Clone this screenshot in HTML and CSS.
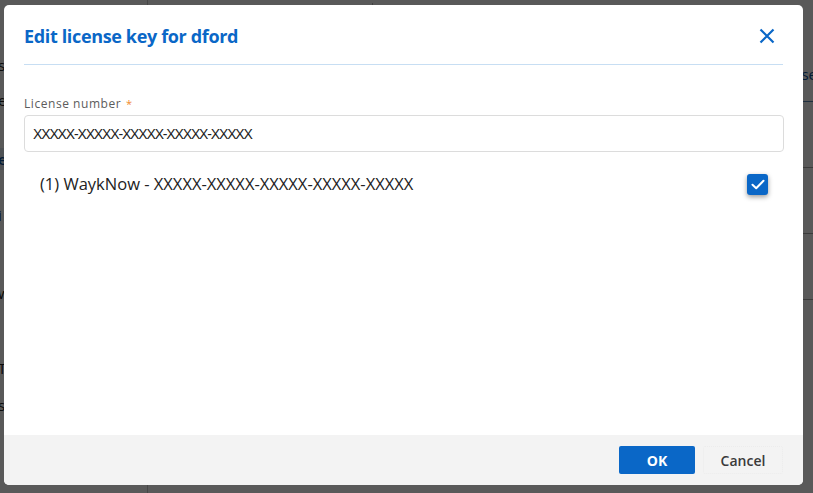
FILE: index.html
```html
<!DOCTYPE html>
<html lang="en">
<head>
<meta charset="utf-8">
<title>Edit license key</title>
<link rel="stylesheet" href="styles.css">
</head>
<body>
<div class="app">
  <aside class="side">
    <div class="side-item i1">s</div>
    <div class="side-item i2">e</div>
    <div class="side-item active">e</div>
    <div class="side-item i4">i</div>
    <div class="side-item i5">w</div>
    <div class="side-item i6">T</div>
    <div class="side-item i7">s</div>
  </aside>
  <main class="main">
    <div class="topbar">
      <div class="page-title">USERS</div>
      <div class="search">Search</div>
    </div>
    <div class="rows">
      <div class="row-line blue"><span class="row-link">se</span></div>
      <div class="row-line"></div>
      <div class="row-line"></div>
      <div class="row-line"></div>
    </div>
  </main>
</div>
<div class="overlay">
  <div class="dialog" role="dialog">
    <header class="dlg-head">
      <h1 class="dlg-title">Edit license key for dford</h1>
      <button class="close" aria-label="Close">
        <svg width="16" height="16" viewBox="0 0 16 16"><path d="M1.5 1.5 L14.5 14.5 M14.5 1.5 L1.5 14.5" stroke="#0a67c7" stroke-width="2.2" fill="none"/></svg>
      </button>
    </header>
    <div class="dlg-body">
      <label class="field-label">License number <span class="req">*</span></label>
      <div class="input">XXXXX-XXXXX-XXXXX-XXXXX-XXXXX</div>
      <div class="lic-row">
        <span class="lic-text">(1) WaykNow - XXXXX-XXXXX-XXXXX-XXXXX-XXXXX</span>
        <span class="check">
          <svg width="14" height="11" viewBox="0 0 14 11"><path d="M1.5 5.8 L5.2 9.2 L12.5 1.8" stroke="#fff" stroke-width="2" fill="none" stroke-linecap="round" stroke-linejoin="round"/></svg>
        </span>
      </div>
    </div>
    <footer class="dlg-foot">
      <button class="btn ok">OK</button>
      <button class="btn cancel">Cancel</button>
    </footer>
  </div>
</div>
</body>
</html>
```
FILE: styles.css
```css
* { box-sizing: border-box; }
html, body { margin: 0; height: 100%; }
body {
  font-family: "Open Sans", "Noto Sans", sans-serif;
  background: #fff;
  overflow: hidden;
  position: relative;
}
.app {
  display: flex;
  height: 493px;
  background: #fff;
}
.side {
  width: 148px;
  border-right: 1px solid #ccc;
  padding-top: 48px;
  display: flex;
  flex-direction: column;
}
.side-item {
  height: 34px;
  margin-left: -2px;
  font-size: 15px;
  color: #222;
  display: flex;
  align-items: center;
}
.i2 { margin-top: 1px; }
.side-item.active { margin-top: 31px; height: 22px; background: #e3ebf3; color: #0a4f98; font-weight: 600; }
.i4 { margin-top: 28px; }
.i5 { margin-top: 44px; }
.i6 { margin-top: 41px; }
.i7 { margin-top: 3px; }
.main { flex: 1; display: flex; flex-direction: column; }
.topbar {
  display: flex;
  align-items: flex-end;
  height: 12px;
  padding-left: 36px;
  gap: 110px;
  overflow: hidden;
}
.page-title { font-size: 26px; color: #111; line-height: 20px; margin-bottom: -11px; }
.search {
  width: 420px;
  border-left: 1px solid #bbb;
  padding-left: 6px;
  font-size: 18px;
  color: #999;
  line-height: 20px;
  margin-bottom: -11px;
}
.rows { margin-top: 50px; }
.row-line { height: 66px; border-bottom: 1px solid #aaa; text-align: right; }
.row-line.blue { height: 40px; border-bottom-color: #5a86b5; }
.row-link { font-size: 15px; color: #0a4f98; margin-right: -4px; line-height: 24px; }

.overlay {
  position: absolute;
  inset: 0;
  background: rgba(0, 0, 0, 0.65);
  padding: 5px 10px 8px 4px;
  display: flex;
}
.dialog {
  flex: 1;
  background: #fff;
  border-radius: 5px;
  display: flex;
  flex-direction: column;
  overflow: hidden;
}
.dlg-head {
  margin: 0 20px;
  padding: 18px 0 15px;
  border-bottom: 1px solid #c7def3;
  display: flex;
  align-items: center;
  justify-content: space-between;
}
.dlg-title {
  margin: 0;
  font-size: 18px;
  line-height: 26px;
  font-weight: 700;
  color: #0a67c7;
  letter-spacing: -0.35px;
}
.close {
  border: 0;
  background: none;
  padding: 0;
  width: 16px;
  height: 16px;
  display: flex;
  margin-right: 8px;
}
.dlg-body {
  flex: 1;
  padding: 31px 19px 0 20px;
}
.field-label {
  display: block;
  font-size: 12px;
  line-height: 16px;
  color: #5c5c5c;
  letter-spacing: 0.55px;
}
.req { color: #f08a30; font-size: 11px; margin-left: 1px; }
.input {
  margin-top: 3px;
  height: 37px;
  border: 1px solid #dcdcdc;
  border-radius: 4px;
  padding: 0 8px;
  display: flex;
  align-items: center;
  font-family: "Liberation Sans", Arial, sans-serif;
  font-size: 14px;
  letter-spacing: -1.15px;
  color: #222;
}
.lic-row {
  display: flex;
  align-items: center;
  justify-content: space-between;
  padding: 21px 16px 0 16px;
}
.lic-text { font-size: 16.5px; color: #222; line-height: 22px; }
.check {
  width: 21px;
  height: 21px;
  background: #0a67c7;
  border-radius: 3px;
  box-shadow: 0 2px 5px rgba(0, 0, 0, 0.4);
  display: flex;
  align-items: center;
  justify-content: center;
}
.dlg-foot {
  height: 50px;
  background: #f3f3f3;
  display: flex;
  align-items: center;
  justify-content: flex-end;
  gap: 8px;
  padding-right: 20px;
}
.btn {
  height: 28px;
  font-family: "Open Sans", "Noto Sans", sans-serif;
  font-size: 14px;
  font-weight: 700;
  border-radius: 2px;
  cursor: pointer;
}
.ok { width: 76px; background: #0a67c7; color: #fff; border: 0; }
.cancel { width: 80px; background: transparent; color: #3a3a3a; border: 1px dotted #ececec; font-weight: 600; }
```
